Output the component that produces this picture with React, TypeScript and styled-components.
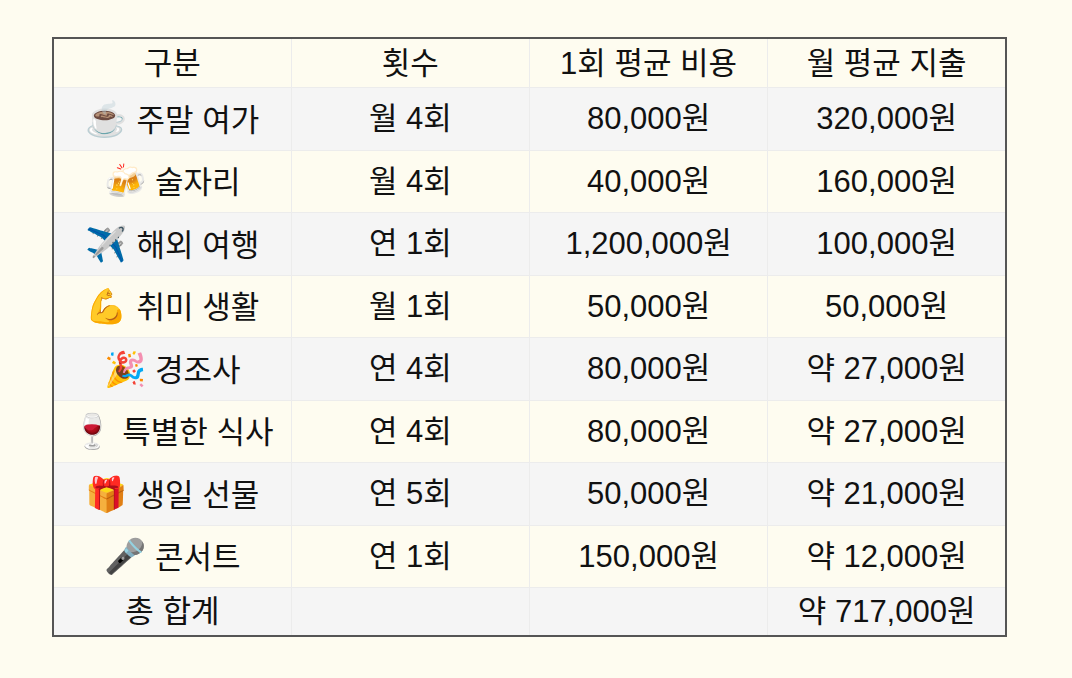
import React from 'react';
import styled, { createGlobalStyle } from 'styled-components';

const GlobalStyle = createGlobalStyle`
  html, body {
    margin: 0;
    padding: 0;
    background: #fefcf0;
  }
  body {
    font-family: "Liberation Sans", "Noto Sans CJK KR", "Noto Color Emoji", sans-serif;
    color: #111;
  }
`;

interface IRow {
  icon: string;
  name: string;
  count: string;
  unit: string;
  monthly: string;
}

const rows: IRow[] = [
  { icon: '☕', name: '주말 여가', count: '월 4회', unit: '80,000원', monthly: '320,000원' },
  { icon: '🍻', name: '술자리', count: '월 4회', unit: '40,000원', monthly: '160,000원' },
  { icon: '✈️', name: '해외 여행', count: '연 1회', unit: '1,200,000원', monthly: '100,000원' },
  { icon: '💪', name: '취미 생활', count: '월 1회', unit: '50,000원', monthly: '50,000원' },
  { icon: '🎉', name: '경조사', count: '연 4회', unit: '80,000원', monthly: '약 27,000원' },
  { icon: '🍷', name: '특별한 식사', count: '연 4회', unit: '80,000원', monthly: '약 27,000원' },
  { icon: '🎁', name: '생일 선물', count: '연 5회', unit: '50,000원', monthly: '약 21,000원' },
  { icon: '🎤', name: '콘서트', count: '연 1회', unit: '150,000원', monthly: '약 12,000원' },
];

const App = () => {
  return (
    <PageWrap>
      <GlobalStyle />
      <Table>
        <thead>
          <Row $gray={false}>
            <HeadCell>구분</HeadCell>
            <HeadCell>횟수</HeadCell>
            <HeadCell>1회 평균 비용</HeadCell>
            <HeadCell>월 평균 지출</HeadCell>
          </Row>
        </thead>
        <tbody>
          {rows.map((row, i) => (
            <Row key={row.name} $gray={i % 2 === 0}>
              <Cell>
                <Icon>{row.icon}</Icon> {row.name}
              </Cell>
              <Cell>{row.count}</Cell>
              <Cell>{row.unit}</Cell>
              <Cell>{row.monthly}</Cell>
            </Row>
          ))}
          <Row $gray={true}>
            <TotalCell>총 합계</TotalCell>
            <TotalCell />
            <TotalCell />
            <TotalCell>약 717,000원</TotalCell>
          </Row>
        </tbody>
      </Table>
    </PageWrap>
  );
};

const PageWrap = styled.div`
  width: 1072px;
  height: 678px;
  padding: 37px 0 0 52px;
  box-sizing: border-box;
`;

const Table = styled.table`
  width: 955px;
  border-collapse: collapse;
  table-layout: fixed;
  border: 2px solid #555;
  font-size: 31px;
`;

const Row = styled.tr<{ $gray: boolean }>`
  background: ${({ $gray }) => ($gray ? '#f5f5f5' : '#fefcf0')};
`;

const HeadCell = styled.th`
  height: 48px;
  padding: 0;
  font-weight: 400;
  text-align: center;
  vertical-align: middle;
  border: 1px solid #ececec;
  line-height: 1;
`;

const Cell = styled.td`
  height: 61.5px;
  padding: 0;
  text-align: center;
  vertical-align: middle;
  border: 1px solid #ececec;
  line-height: 1;
  white-space: nowrap;
`;

const TotalCell = styled(Cell)`
  height: 47px;
`;

const Icon = styled.span`
  font-size: 34px;
`;

export default App;
